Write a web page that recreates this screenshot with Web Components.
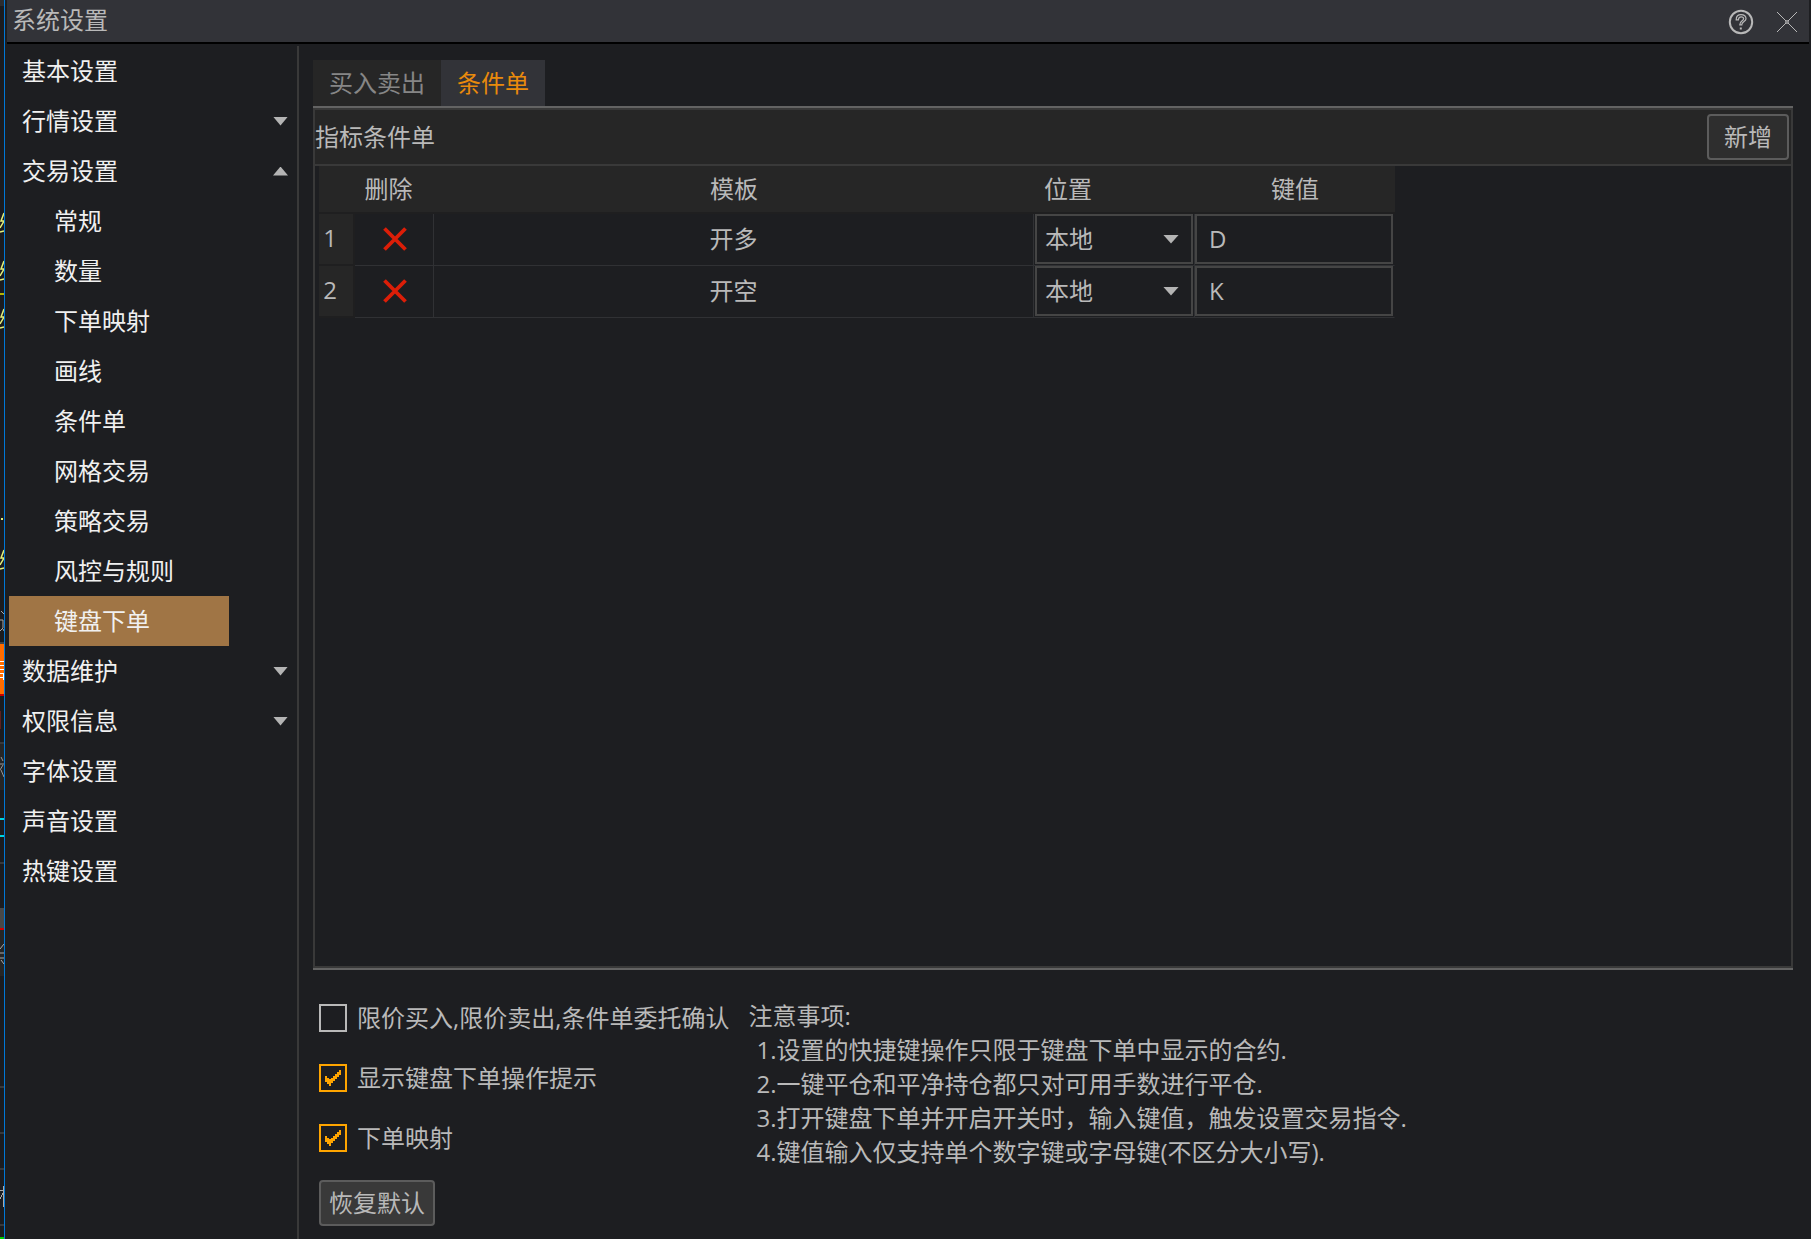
<!DOCTYPE html>
<html lang="zh-CN">
<head>
<meta charset="utf-8">
<title>系统设置</title>
<style>
  :root {
    --bg: #1d1e21; --panel: #262626; --line: #393939; --line-strong: #636363;
    --text: #b9b9b9; --text-bright: #f0f0f0; --accent: #ffa500;
  }
  html, body { margin: 0; height: 100%; overflow: hidden; }
  body { background: var(--bg); color: var(--text); font: 24px/34px "Open Sans", "Noto Sans CJK SC", sans-serif; }
</style>
</head>
<body>
<settings-window>
  <title-bar slot="title">系统设置</title-bar>
  <side-nav slot="nav">
    <nav-item>基本设置</nav-item>
    <nav-item arrow="down">行情设置</nav-item>
    <nav-item arrow="up">交易设置</nav-item>
    <nav-item sub>常规</nav-item>
    <nav-item sub>数量</nav-item>
    <nav-item sub>下单映射</nav-item>
    <nav-item sub>画线</nav-item>
    <nav-item sub>条件单</nav-item>
    <nav-item sub>网格交易</nav-item>
    <nav-item sub>策略交易</nav-item>
    <nav-item sub>风控与规则</nav-item>
    <nav-item sub active>键盘下单</nav-item>
    <nav-item arrow="down">数据维护</nav-item>
    <nav-item arrow="down">权限信息</nav-item>
    <nav-item>字体设置</nav-item>
    <nav-item>声音设置</nav-item>
    <nav-item>热键设置</nav-item>
  </side-nav>
  <tab-strip><tab-button>买入卖出</tab-button><tab-button active>条件单</tab-button></tab-strip>
  <order-panel>
    <span slot="heading">指标条件单</span>
    <push-button slot="action">新增</push-button>
    <key-table></key-table>
  </order-panel>
  <options-area>
    <check-option>限价买入,限价卖出,条件单委托确认</check-option>
    <check-option checked>显示键盘下单操作提示</check-option>
    <check-option checked>下单映射</check-option>
    <push-button slot="reset" compact>恢复默认</push-button>
    <notes-list slot="notes"></notes-list>
  </options-area>
</settings-window>

<script>
function define(name, html, setup) {
  const tpl = document.createElement('template');
  tpl.innerHTML = html;
  customElements.define(name, class extends HTMLElement {
    connectedCallback() {
      if (this.shadowRoot) return;
      this.attachShadow({ mode: 'open' }).appendChild(tpl.content.cloneNode(true));
      if (setup) setup(this, this.shadowRoot);
    }
  });
}

// Sliver of the trading window that lies behind the dialog
define('backdrop-strip', `
<style>
  :host { display: block; width: 4px; overflow: hidden; border-right: 1px solid #0078d7; background: #1b1c1f; }
  svg { display: block; }
</style>
<svg width="4" height="1239" viewBox="0 0 4 1239" shape-rendering="crispEdges" fill="none" aria-hidden="true">
  <rect width="4" height="6" fill="#2c2d30"/>
  <rect y="742" width="4" height="48" fill="#262626"/><rect y="930" width="4" height="46" fill="#262626"/>
  <g stroke="#e4f07a" stroke-width="1.5" shape-rendering="auto">
    <path d="M4 213L1 221H4L0 228M0 232L4 231"/><path d="M4 261L1 269H4L0 276M0 280L4 279"/>
    <path d="M4 309L1 317H4L0 324M0 328L4 327"/><path d="M4 550L1 558H4L0 565M0 569L4 568"/>
  </g>
  <rect y="293" width="4" height="2" fill="#b4b400"/><rect x="1" y="518" width="2" height="2" fill="#e4f07a"/>
  <path d="M1 611L4 614M0 620H3V628L0 631M3 629L4 631" stroke="#a8a8a8" shape-rendering="auto"/>
  <rect y="642" width="4" height="2" fill="#444"/><rect y="644" width="4" height="50" fill="#ff6c00"/>
  <path d="M0 661H4M0 665H4M0 669H4M0 673H3V680M0 677H3" stroke="#fff"/>
  <rect y="694" width="4" height="2" fill="#c80000"/><rect y="711" width="1" height="18" fill="#5c2020"/>
  <path d="M0 743H4M0 862.5H4M0 1087H4M0 1133H4M0 1169H4M0 1225H4" stroke="#38393b" stroke-width="2"/>
  <path d="M1 757L3 761M0 764H4M3 765L0 770M1 770L4 777" stroke="#999" shape-rendering="auto"/>
  <path d="M0 819H4M0 836H4" stroke="#00d5e0" stroke-width="2"/>
  <rect y="908" width="4" height="20" fill="#484848"/><rect y="928" width="4" height="2" fill="#d00000"/>
  <path d="M4 944L0 949M0 953H4M0 958H4M1 960L4 964" stroke="#aaa" shape-rendering="auto"/>
  <path d="M3 1186V1207M0 1190H4M3 1193L0 1199" stroke="#aaa"/><rect y="1237" width="4" height="2" fill="#00d000"/>
</svg>`);

define('settings-window', `
<style>
  :host { display: flex; height: 100vh; background: var(--bg); }
  .frame { flex: 1; min-width: 0; display: flex; flex-direction: column; padding: 0 2px; }
  .body { flex: 1; min-height: 0; display: flex; }
  main { flex: 1; min-width: 0; display: flex; flex-direction: column; padding: 16px 16px 0 14px; }
</style>
<backdrop-strip></backdrop-strip>
<div class="frame">
  <slot name="title"></slot>
  <div class="body"><slot name="nav"></slot><main><slot></slot></main></div>
</div>`);

define('title-bar', `
<style>
  :host { display: flex; align-items: center; height: 42px; padding: 0 9px 0 5px; border-bottom: 2px solid #000; background: #323338; }
  h1 { flex: 1; margin: 0; font: inherit; padding-bottom: 2px; }
  .tools { display: flex; gap: 19px; padding-top: 2px; }
  button { display: block; padding: 0; border: 0; background: none; color: #b8b8b8; }
  svg { display: block; }
</style>
<h1><slot></slot></h1>
<div class="tools">
  <button aria-label="帮助"><svg width="28" height="26" viewBox="0 0 28 26" fill="none" stroke="currentColor" stroke-width="2">
    <circle cx="14" cy="13" r="11.2"/><path d="M9.2 10.8C9.2 7 11 5.6 14 5.6S19 7.2 19 9.7C19 12.6 14.8 12.4 14.8 15.8H12.8C12.8 11.8 16.6 12 16.6 9.8C16.6 8.6 15.8 7.9 14.2 7.9C12.4 7.9 11.6 8.8 11.4 10.8Z" stroke-width="1.2"/><path d="M13.8 18.5V20.5"/></svg></button>
  <button aria-label="关闭"><svg width="26" height="26" viewBox="0 0 26 26" fill="none" stroke="currentColor"><path d="M3 3L23 23M23 3L3 23"/><path d="M11 13H15M13 11V15" stroke-width="2" stroke="#8c8c8e"/></svg></button>
</div>`);

define('side-nav', `
<style>
  :host { display: block; width: 290px; margin-top: 2px; border-right: 2px solid var(--line); }
  nav { display: flex; flex-direction: column; }
</style>
<nav aria-label="设置分类"><slot></slot></nav>`);

define('nav-item', `
<style>
  :host { display: flex; padding-left: 2px; }
  a { flex: 1; display: flex; align-items: center; justify-content: space-between; height: 50px; padding: 0 9px 0 13px; box-sizing: border-box; color: var(--text-bright); text-decoration: none; white-space: nowrap; }
  :host([sub]) a { flex: none; width: 220px; padding-left: 45px; }
  :host([active]) a { background: #a07545; }
  i { display: none; width: 15px; height: 9px; background: #b4b4b4; }
  :host([arrow]) i { display: block; }
  :host([arrow=down]) i { clip-path: polygon(0 0, 100% 0, 50% 100%); }
  :host([arrow=up]) i { clip-path: polygon(0 100%, 100% 100%, 50% 0); }
</style>
<a href="#"><slot></slot><i></i></a>`, (host, root) => {
  const a = root.querySelector('a');
  if (host.hasAttribute('active')) a.setAttribute('aria-current', 'page');
  if (host.hasAttribute('arrow')) a.setAttribute('aria-expanded', host.getAttribute('arrow') === 'up');
});

define('tab-strip', `
<style>:host { display: flex; height: 46px; }</style>
<slot></slot>`, host => host.setAttribute('role', 'tablist'));

define('tab-button', `
<style>
  :host { display: flex; }
  button { padding: 0 16px; border: 0; font: inherit; color: #868686; background: var(--panel); white-space: nowrap; }
  :host([active]) button { color: #e98a0c; background: #323338; }
</style>
<button role="tab"><slot></slot></button>`, (host, root) =>
  root.querySelector('button').setAttribute('aria-selected', host.hasAttribute('active')));

define('push-button', `
<style>
  :host { display: block; }
  button { height: 46px; padding: 0 15px; border: 2px solid #5c5c5c; border-radius: 4px; background: #2e2e2e; color: inherit; font: inherit; line-height: 40px; white-space: nowrap; }
  :host([compact]) button { padding: 0 8px; background: #393939; }
</style>
<button><slot></slot></button>`);

define('order-panel', `
<style>
  :host { flex: 1; min-height: 0; display: flex; flex-direction: column; border-top: 2px solid var(--line-strong); border-bottom: 2px solid var(--line-strong); }
  section { flex: 1; display: flex; flex-direction: column; border: 2px solid var(--line); }
  header { display: flex; align-items: center; justify-content: space-between; height: 54px; padding-right: 2px; border-bottom: 2px solid var(--line); background: var(--panel); }
  .content { flex: 1; padding-left: 4px; }
</style>
<section>
  <header><slot name="heading"></slot><slot name="action"></slot></header>
  <div class="content"><slot></slot></div>
</section>`);

define('place-select', `
<style>
  :host { display: grid; align-items: center; }
  select, i { grid-area: 1 / 1; }
  select { appearance: none; width: 100%; height: 50px; padding: 0 8px; border: 2px solid #454545; border-radius: 0; background: var(--bg); color: inherit; font: inherit; }
  i { justify-self: end; margin-right: 14px; width: 16px; height: 9px; background: #b4b4b4; clip-path: polygon(0 0, 100% 0, 50% 100%); pointer-events: none; }
</style>
<select aria-label="位置"><option>本地</option></select><i></i>`);

define('key-input', `
<style>
  :host { display: block; }
  input { display: block; box-sizing: border-box; width: 100%; height: 50px; padding: 0 12px 2px; border: 2px solid #454545; border-radius: 0; background: var(--bg); color: inherit; font: inherit; }
</style>
<input aria-label="键值" maxlength="1">`, (host, root) => root.querySelector('input').value = host.getAttribute('value'));

const row = (n, name, key) => `
  <tr><th scope="row">${n}</th>
    <td class="del"><button aria-label="删除"><svg width="24" height="24" viewBox="0 0 24 24" stroke="#dc1e08" stroke-width="3.8" fill="none"><path d="M1.5 1.5L22.5 22.5M22.5 1.5L1.5 22.5"/></svg></button></td>
    <td>${name}</td><td class="field"><place-select></place-select></td><td class="field"><key-input value="${key}"></key-input></td></tr>`;

define('key-table', `
<style>
  :host { display: block; }
  table { table-layout: fixed; width: 1076px; border-spacing: 0; }
  th, td { box-sizing: border-box; padding: 0; font-weight: 400; text-align: center; }
  thead th { height: 48px; background: var(--panel); border-bottom: 2px solid #1f1f20; }
  thead th.del { padding-right: 12px; }
  thead th.place { padding-left: 10px; text-align: left; }
  tbody th { border: solid #1f1f20; border-width: 0 2px 2px 0; background: var(--panel); padding: 0 12px 2px 0; }
  td { height: 52px; padding-bottom: 2px; border: solid #303134; border-width: 0 1px 1px 0; vertical-align: middle; }
  td.del { padding: 0 0 1px 2px; }
  td.field { padding: 0 1px 1px; }
  td:last-child { padding-left: 0; border-right-color: transparent; }
  button { padding: 0; border: 0; background: none; display: block; margin: 0 auto; }
  svg { display: block; }
</style>
<table>
  <colgroup><col style="width:36px"><col style="width:79px"><col style="width:600px"><col style="width:161px"><col style="width:200px"></colgroup>
  <thead><tr><th></th><th scope="col" class="del">删除</th><th scope="col">模板</th><th scope="col" class="place">位置</th><th scope="col">键值</th></tr></thead>
  <tbody>${row(1, '开多', 'D')}${row(2, '开空', 'K')}</tbody>
</table>`);

define('options-area', `
<style>
  :host { display: flex; gap: 19px; padding: 29px 6px 13px; }
  .checks { display: flex; flex-direction: column; align-items: flex-start; gap: 22px; }
  .reset { margin-top: 1px; }
</style>
<div class="checks"><slot></slot><div class="reset"><slot name="reset"></slot></div></div>
<slot name="notes"></slot>`);

define('check-option', `
<style>
  :host { display: block; }
  label { display: flex; align-items: center; gap: 10px; height: 38px; white-space: nowrap; }
  .box { display: grid; }
  input, svg { grid-area: 1 / 1; }
  input { appearance: none; box-sizing: border-box; width: 28px; height: 28px; margin: 0; border: 2px solid #b9b9b9; }
  input:checked { border-color: var(--accent); }
  svg { display: block; visibility: hidden; pointer-events: none; }
  input:checked + svg { visibility: visible; }
</style>
<label><span class="box"><input type="checkbox"><svg width="28" height="28" viewBox="0 0 28 28" fill="#ffa500" shape-rendering="crispEdges"><path d="M6 12H8V14H10V15H12V14H14V12H16V10H18V8H20V6H22V11H20V13H18V15H16V17H14V19H12V22H10V20H8V18H6Z"/></svg></span><slot></slot></label>`,
  (host, root) => root.querySelector('input').checked = host.hasAttribute('checked'));

define('notes-list', `
<style>
  :host { display: block; }
  p, ol { margin: 0; padding: 0; list-style: none; }
  ol { padding-left: 8px; }
</style>
<p>注意事项:</p>
<ol><li>1.设置的快捷键操作只限于键盘下单中显示的合约.</li><li>2.一键平仓和平净持仓都只对可用手数进行平仓.</li><li>3.打开键盘下单并开启开关时，输入键值，触发设置交易指令.</li><li>4.键值输入仅支持单个数字键或字母键(不区分大小写).</li></ol>`);
</script>
</body>
</html>
